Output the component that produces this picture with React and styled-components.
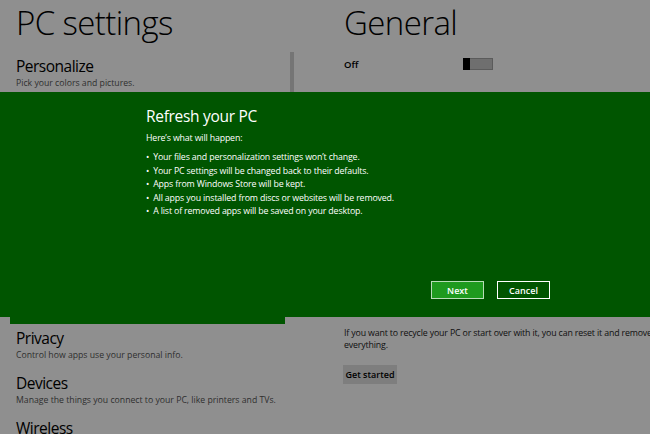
import React from "react";
import styled, { createGlobalStyle } from "styled-components";

const GlobalStyle = createGlobalStyle`
  html, body {
    margin: 0;
    padding: 0;
    width: 650px;
    height: 434px;
    overflow: hidden;
    background: #ffffff;
    font-family: "Open Sans", "Noto Sans", sans-serif;
  }
`;

const Screen = styled.div`
  position: relative;
  width: 650px;
  height: 434px;
  overflow: hidden;
  background: #ffffff;
`;

const Columns = styled.div`
  display: grid;
  grid-template-columns: 290px 4px 1fr;
  height: 100%;
`;

const LeftPane = styled.div`
  display: flex;
  flex-direction: column;
  padding-left: 10px;
  padding-right: 5px;
`;

const PageTitle = styled.h1`
  margin: 1px 0 0 ${(p) => p.$indent || 0}px;
  font-size: 33px;
  font-weight: 300;
  line-height: 44px;
  color: #000;
  letter-spacing: -0.6px;
  white-space: nowrap;
`;

const NavList = styled.ul`
  list-style: none;
  margin: 11px 0 0;
  padding: 0;
`;

const NavItem = styled.li`
  height: 41.3px;
  margin-bottom: 4px;
  padding: 0 6px;
  box-sizing: border-box;
  background: ${(p) => (p.$selected ? "#009800" : "transparent")};
  color: ${(p) => (p.$selected ? "#fff" : "#000")};
`;

const NavTitle = styled.div`
  font-size: 15.5px;
  font-weight: 400;
  line-height: 20px;
  letter-spacing: -0.5px;
`;

const NavDesc = styled.div`
  margin-top: 1.3px;
  font-size: 8.7px;
  line-height: 12px;
  color: ${(p) => (p.$selected ? "#fff" : "#555")};
  white-space: nowrap;
`;

const ScrollTrack = styled.div`
  margin-top: 52px;
  height: 200px;
  background: #d0d0d0;
`;

const RightPane = styled.div`
  display: flex;
  flex-direction: column;
  padding-left: 50px;
  color: #000;
`;

const ToggleRow = styled.div`
  display: flex;
  align-items: center;
  margin-top: 13px;
  height: 12px;
`;

const ToggleLabel = styled.span`
  width: 119px;
  font-size: 9.5px;
  font-weight: 600;
`;

const Toggle = styled.div`
  display: flex;
  width: 30px;
  height: 12px;
  box-sizing: border-box;
  border: 1px solid #a2a2a2;
  background: #c6c6c6;
`;

const Thumb = styled.div`
  width: 7px;
  height: 12px;
  margin: -1px 0 0 -1px;
  background: #000;
`;

const SectionHeading = styled.h2`
  margin: ${(p) => p.$top}px 0 0;
  font-size: 15.5px;
  font-weight: 400;
  line-height: 22px;
  letter-spacing: -0.5px;
  white-space: nowrap;
`;

const Paragraph = styled.p`
  margin: ${(p) => p.$top || 0}px 0 0;
  font-size: 8.8px;
  line-height: 12.5px;
  letter-spacing: -0.15px;
  color: #222;
  white-space: nowrap;
`;

const GrayButton = styled.button`
  align-self: flex-start;
  margin-top: ${(p) => p.$top || 12}px;
  margin-left: -1px;
  width: 54px;
  height: 19px;
  padding: 0;
  border: none;
  background: #e0e0e0;
  font-family: inherit;
  font-size: 9px;
  font-weight: 600;
  color: #000;
  white-space: nowrap;
`;

const Dim = styled.div`
  position: absolute;
  inset: 0;
  background: rgba(0, 0, 0, 0.44);
`;

const Dialog = styled.div`
  position: absolute;
  left: 0;
  right: 0;
  top: 92px;
  height: 225px;
  background: #005500;
  color: #fff;
  display: flex;
  padding-left: 146px;
`;

const DialogBody = styled.div`
  width: 404px;
  display: flex;
  flex-direction: column;
`;

const DialogTitle = styled.h2`
  margin: 13px 0 0;
  font-size: 15.5px;
  font-weight: 400;
  line-height: 22px;
  letter-spacing: -0.3px;
`;

const DialogLead = styled.p`
  margin: 4.6px 0 0;
  font-size: 8.8px;
  line-height: 12.5px;
  letter-spacing: -0.15px;
`;

const BulletList = styled.ul`
  list-style: none;
  margin: 7px 0 0;
  padding: 0;
`;

const Bullet = styled.li`
  font-size: 8.8px;
  line-height: 13.5px;
  letter-spacing: -0.15px;
  white-space: nowrap;
  &::before {
    content: "•";
    margin-right: 4px;
  }
`;

const ButtonRow = styled.div`
  display: flex;
  justify-content: flex-end;
  gap: 13px;
  margin-top: auto;
  margin-bottom: 18px;
`;

const DialogButton = styled.button`
  width: 53px;
  height: 18px;
  padding: 0;
  box-sizing: border-box;
  border: 1.5px solid ${(p) => (p.$primary ? "#b8dcb8" : "#ffffff")};
  background: ${(p) => (p.$primary ? "#1e9a1e" : "#005500")};
  color: #fff;
  font-family: inherit;
  font-size: 9px;
  font-weight: 600;
`;

const navItems = [
  { title: "Personalize", desc: "Pick your colors and pictures." },
  { title: "Users", desc: "Change your account and sign-in options." },
  { title: "Notifications", desc: "Choose which apps can notify you." },
  { title: "Search", desc: "Choose what to search and how results appear." },
  { title: "Share", desc: "Choose how you share with apps and people." },
  { title: "General", desc: "Change time zone and other settings.", selected: true },
  { title: "Privacy", desc: "Control how apps use your personal info." },
  { title: "Devices", desc: "Manage the things you connect to your PC, like printers and TVs." },
  { title: "Wireless", desc: "Turn wireless devices on or off." },
];

const bullets = [
  "Your files and personalization settings won’t change.",
  "Your PC settings will be changed back to their defaults.",
  "Apps from Windows Store will be kept.",
  "All apps you installed from discs or websites will be removed.",
  "A list of removed apps will be saved on your desktop.",
];

export default function App() {
  return (
    <>
      <GlobalStyle />
      <Screen>
        <Columns>
          <LeftPane>
            <PageTitle $indent={6}>PC settings</PageTitle>
            <NavList>
              {navItems.map((item) => (
                <NavItem key={item.title} $selected={item.selected}>
                  <NavTitle>{item.title}</NavTitle>
                  <NavDesc $selected={item.selected}>{item.desc}</NavDesc>
                </NavItem>
              ))}
            </NavList>
          </LeftPane>
          <ScrollTrack />
          <RightPane>
            <PageTitle>General</PageTitle>
            <ToggleRow>
              <ToggleLabel>Off</ToggleLabel>
              <Toggle>
                <Thumb />
              </Toggle>
            </ToggleRow>
            <SectionHeading $top={40}>Refresh your PC without affecting your files</SectionHeading>
            <Paragraph $top={4}>
              If your PC isn’t running well, you can refresh it without losing your photos,
              <br />
              music, videos and other personal files.
            </Paragraph>
            <GrayButton>Get started</GrayButton>
            <SectionHeading $top={88}>Remove everything and reinstall Windows</SectionHeading>
            <Paragraph $top={24.6}>
              If you want to recycle your PC or start over with it, you can reset it and remove
              <br />
              everything.
            </Paragraph>
            <GrayButton $top={13}>Get started</GrayButton>
          </RightPane>
        </Columns>
        <Dim />
        <Dialog>
          <DialogBody>
            <DialogTitle>Refresh your PC</DialogTitle>
            <DialogLead>Here’s what will happen:</DialogLead>
            <BulletList>
              {bullets.map((b) => (
                <Bullet key={b}>{b}</Bullet>
              ))}
            </BulletList>
            <ButtonRow>
              <DialogButton $primary>Next</DialogButton>
              <DialogButton>Cancel</DialogButton>
            </ButtonRow>
          </DialogBody>
        </Dialog>
      </Screen>
    </>
  );
}
